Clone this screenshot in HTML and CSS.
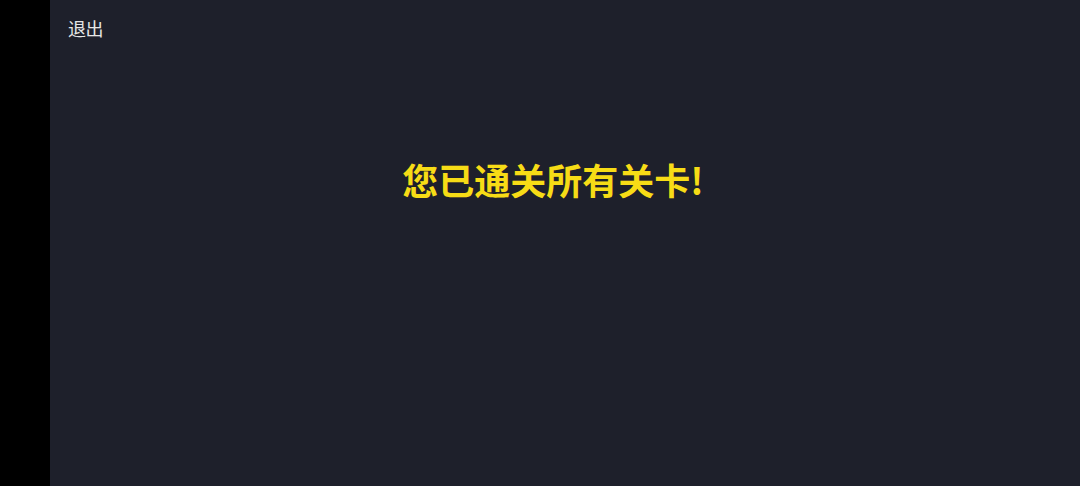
FILE: index.html
```html
<!DOCTYPE html>
<html lang="zh">
<head>
<meta charset="utf-8">
<link rel="stylesheet" href="styles.css">
</head>
<body>
<div class="screen">
  <div class="side"></div>
  <div class="main">
    <div class="topbar"><span class="exit">退出</span></div>
    <div class="msg">您已通关所有关卡!</div>
  </div>
</div>
</body>
</html>
```
FILE: styles.css
```css
html, body {
  margin: 0;
  padding: 0;
  width: 1080px;
  height: 486px;
  overflow: hidden;
  background: #1e202b;
  font-family: "Noto Sans CJK SC", "Noto Sans", sans-serif;
}
.screen {
  display: flex;
  width: 1080px;
  height: 486px;
}
.side {
  width: 50px;
  background: #000;
  flex: none;
}
.main {
  flex: 1;
  background: #1e202b;
  display: flex;
  flex-direction: column;
}
.topbar {
  padding: 16px 0 0 18px;
  height: 30px;
}
.exit {
  color: #e6e6e6;
  font-size: 18px;
  line-height: 24px;
  letter-spacing: -0.5px;
}
.msg {
  margin-top: 108px;
  padding-right: 24px;
  text-align: center;
  color: #f7dc16;
  font-weight: bold;
  font-size: 36px;
  line-height: 50px;
}
```
